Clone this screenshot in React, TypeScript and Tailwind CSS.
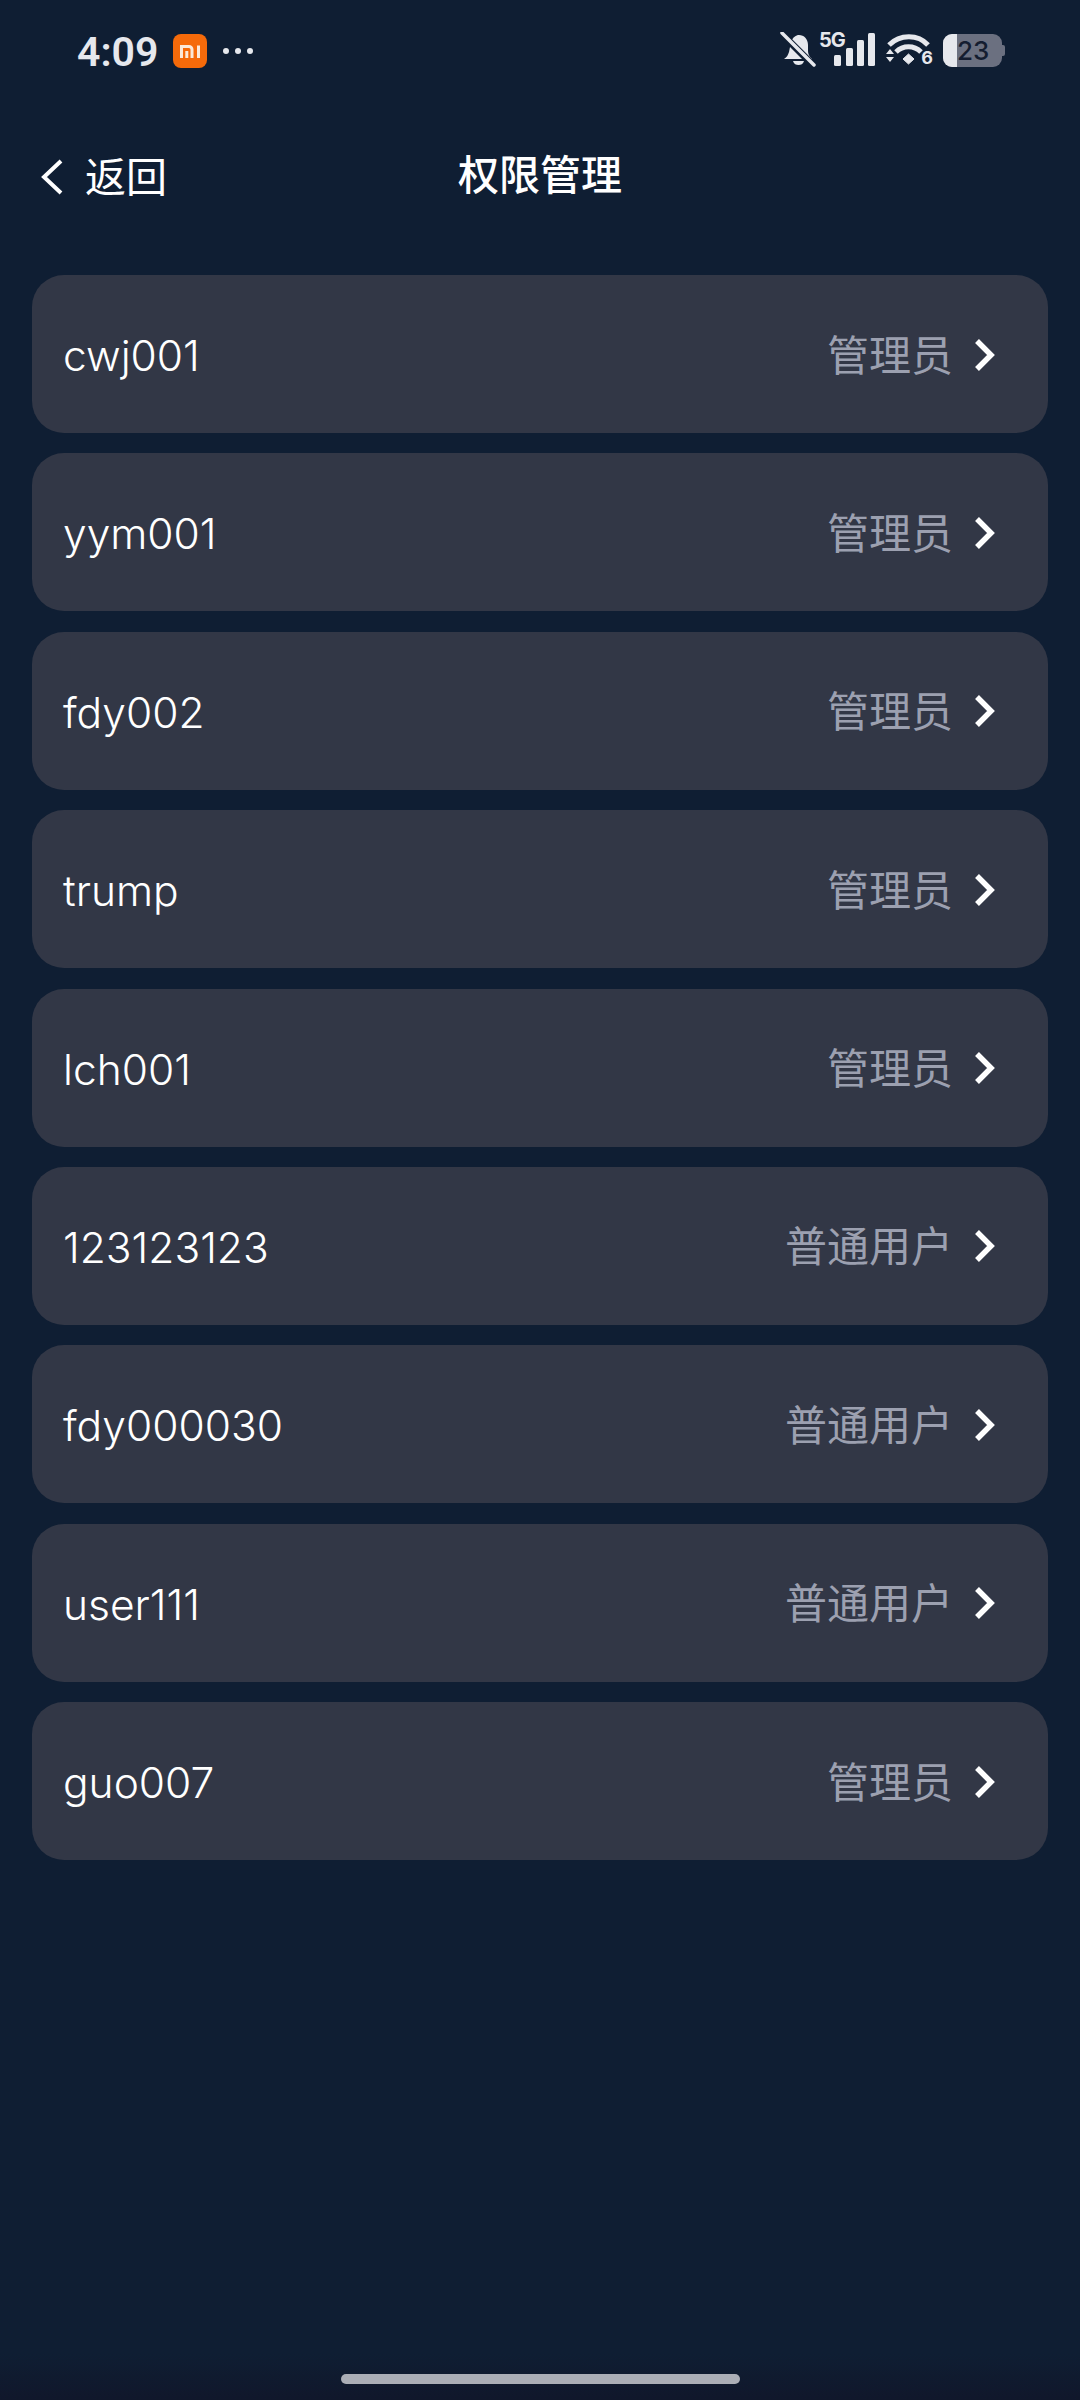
const rows: [string, string][] = [
  ["cwj001", "管理员"],
  ["yym001", "管理员"],
  ["fdy002", "管理员"],
  ["trump", "管理员"],
  ["lch001", "管理员"],
  ["123123123", "普通用户"],
  ["fdy000030", "普通用户"],
  ["user111", "普通用户"],
  ["guo007", "管理员"],
];

const SANS = "font-['Inter','Noto_Sans_CJK_SC',sans-serif]";

function StatusBar() {
  return (
    <div className="h-[100px] flex items-start justify-between pt-[32px] pl-[77px] pr-[75px] text-[#e6e8ed]">
      <div className="flex items-center h-[36px]">
        <span className="w-[84px] text-[41px] leading-[36px] font-semibold font-['Roboto',sans-serif] mt-[3px]">4:09</span>
        <svg className="ml-[12px] mt-[2px]" width="34" height="34" viewBox="0 0 34 34">
          <rect width="34" height="34" rx="8" fill="#f56a0a" />
          <path d="M7 12.500h9a3 3 0 0 1 3 3v8.500M8.500 12.500v11.500M13.800 17v7" fill="none" stroke="#fbe9d8" strokeWidth="3" />
          <path d="M25.500 11.500v12.500" fill="none" stroke="#fbe9d8" strokeWidth="3" />
        </svg>
        <svg className="ml-[15px] mt-[2px]" width="32" height="8" viewBox="0 0 32 8" fill="#e6e8ed">
          <circle cx="4" cy="4" r="3" />
          <circle cx="16" cy="4" r="3" />
          <circle cx="28" cy="4" r="3" />
        </svg>
      </div>
      <div className="flex items-start h-[36px]">
        <svg width="36" height="36" viewBox="0 0 36 36" fill="#e6e8ed">
          <path d="M11 10c2-5 5-7 8-7 5 0 9 4 9 10v6c0 3 1 5 4 8H9l-5 0c3-2 4-4 5-7z" />
          <path d="M13 29h11c-1 3-3 4-5.500 4S14 32 13 29z" />
          <path d="M1 1 L33 33" stroke="#0f1e33" strokeWidth="7" />
          <path d="M2 1 L34 33" stroke="#e6e8ed" strokeWidth="3.500" strokeLinecap="round" />
        </svg>
        <div className="relative w-[58px] h-[36px] ml-[3px]">
          <span className="absolute left-0 top-[-2px] text-[20px] leading-[20px] font-bold tracking-[-1px] font-['Inter',sans-serif]">5G</span>
          <svg className="absolute left-[15px] top-0" width="42" height="35" viewBox="0 0 42 35" fill="#e6e8ed">
            <rect x="0" y="23" width="7" height="11" rx="1.500" />
            <rect x="12" y="16" width="7" height="18" rx="1.500" />
            <rect x="23" y="8" width="7" height="26" rx="1.500" />
            <rect x="34" y="1" width="7" height="33" rx="1.500" />
          </svg>
        </div>
        <div className="relative w-[46px] h-[36px] ml-[9px]">
          <svg width="46" height="36" viewBox="0 0 46 36" fill="none" stroke="#e6e8ed" strokeWidth="5">
            <path d="M3 13C14 2 32 2 42 13" />
            <path d="M10 20c7-7 18-7 25 0" />
            <path d="M17 27l5.500-5 5.500 5-5.500 5z" fill="#e6e8ed" strokeWidth="1" />
            <path d="M0 22l4-5 4 5zM0 25l4 5 4-5z" fill="#e6e8ed" stroke="none" />
          </svg>
          <span className="absolute right-[-1px] top-[17px] text-[18px] leading-[18px] font-bold font-['Inter',sans-serif]">6</span>
        </div>
        <div className="relative w-[62px] h-[34px] ml-[11px] mt-[2px]">
          <div className="absolute left-0 top-0 w-[59px] h-[33px] rounded-[9px] bg-[#6b7080] overflow-hidden">
            <div className="w-[14px] h-full bg-[#e6e8ed]" />
          </div>
          <div className="absolute right-0 top-[11px] w-[3px] h-[11px] rounded-r-[2px] bg-[#6b7080]" />
          <span className="absolute left-[14px] top-0 text-[26px] leading-[33px] font-medium text-[#141d30] font-['Inter',sans-serif]">23</span>
        </div>
      </div>
    </div>
  );
}

function Header() {
  return (
    <div className="relative h-[175px] pb-[26px] flex items-center justify-center">
      <div className="absolute left-[41px] top-[55px] flex items-center">
        <svg width="22" height="36" viewBox="0 0 22 36" fill="none" stroke="#ffffff" strokeWidth="4">
          <path d="M20 2 L3 18 L20 34" />
        </svg>
        <span className={`ml-[22px] text-[41px] leading-[44px] text-white ${SANS}`}>返回</span>
      </div>
      <span className={`text-[41px] leading-[44px] font-medium text-white ${SANS}`}>权限管理</span>
    </div>
  );
}

function Row({ name, role }: { name: string; role: string }) {
  return (
    <div className="h-[158px] rounded-[32px] bg-[#323746] flex items-center pl-[31px] pr-[53px]">
      <span className="flex-1 pt-[4px] text-[42.500px] leading-[50px] font-light text-white font-['Inter',sans-serif]">{name}</span>
      <span className={`pt-[3px] text-[42px] leading-[50px] font-normal text-[#9ca0b0] ${SANS}`}>{role}</span>
      <svg className="ml-[21px] mt-[1px]" width="21" height="32" viewBox="0 0 21 32" fill="none" stroke="#ffffff" strokeWidth="5.500">
        <path d="M3 2 L17 16 L3 30" />
      </svg>
    </div>
  );
}

export default function App() {
  return (
    <div className="w-[1080px] h-[2400px] bg-[#0f1e33] flex flex-col overflow-hidden">
      <StatusBar />
      <Header />
      <div className="flex flex-col gap-[20.4px] px-[32px]">
        {rows.map(([n, r]) => (
          <Row key={n} name={n} role={r} />
        ))}
      </div>
      <div className="mt-auto h-[46px] bg-gradient-to-b from-[#0f1e33] to-[#10172b] flex justify-center pt-[20px]">
        <div className="w-[399px] h-[10px] rounded-full bg-[#abaeb6]" />
      </div>
    </div>
  );
}
